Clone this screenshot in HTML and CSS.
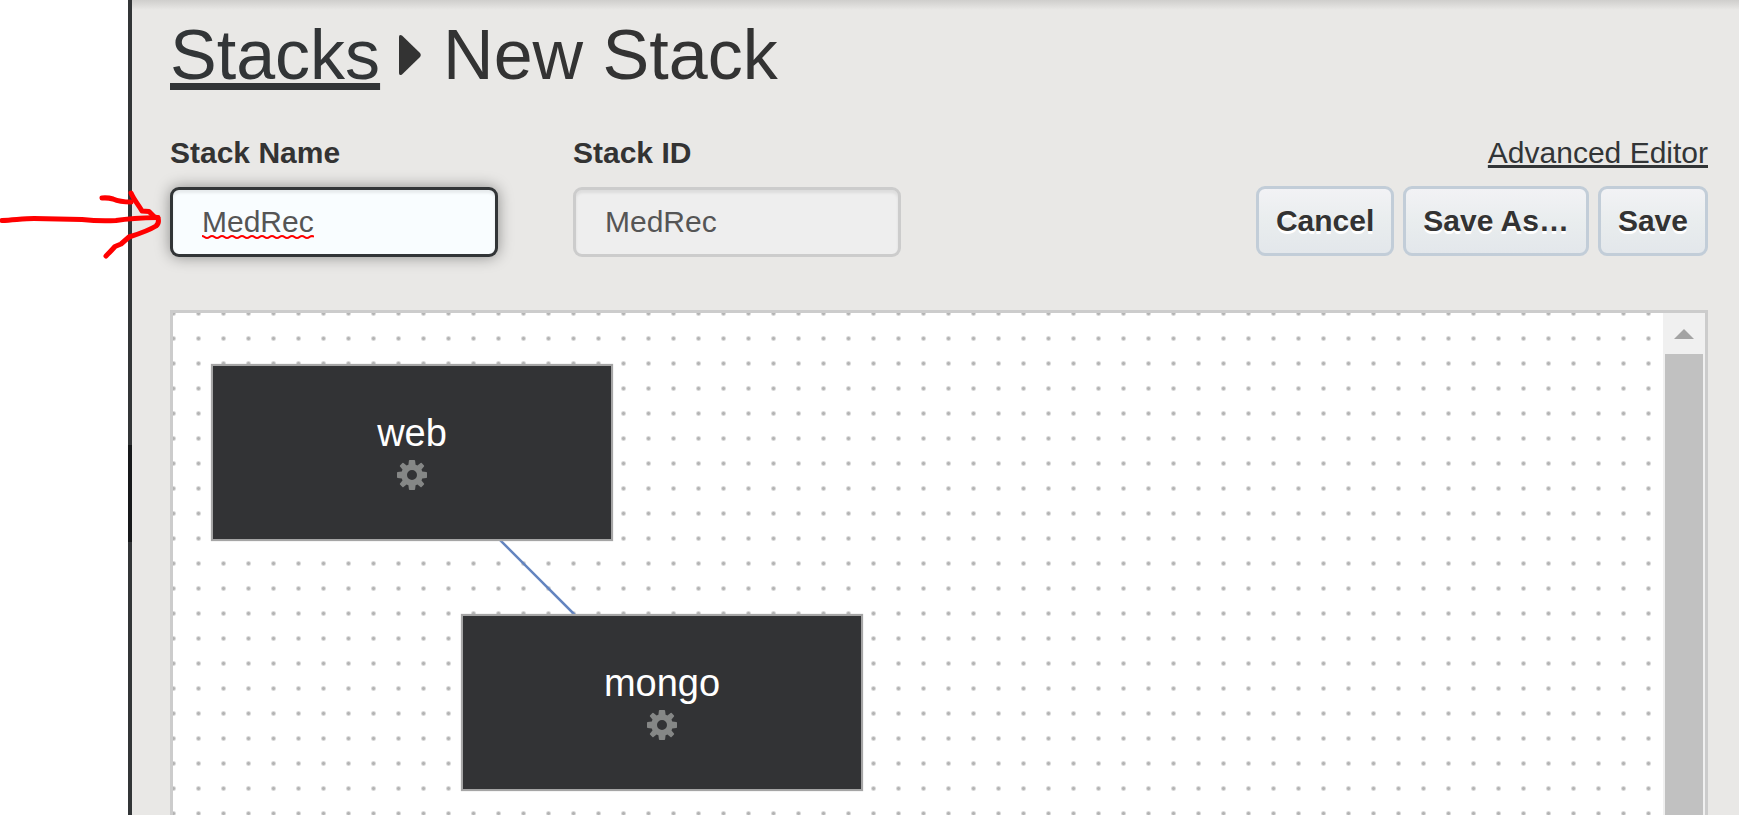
FILE: index.html
```
<!DOCTYPE html>
<html lang="en">
<head>
<meta charset="utf-8">
<title>New Stack</title>
<link rel="stylesheet" href="styles.css">
</head>
<body>
<div class="page">
  <div class="rail"><div class="rail-handle"></div></div>
  <main class="main">
    <h1 class="title">
      <a class="title-link" href="#stacks">Stacks</a>
      <svg class="title-caret" viewBox="0 0 22 42" aria-hidden="true"><path d="M0 3Q0 0 3 1.500L21 19Q22.500 21 21 23L3 40.500Q0 42 0 39Z"/></svg>
      <span>New Stack</span>
    </h1>
    <form class="toolbar">
      <div class="field">
        <label class="label" for="stack-name">Stack Name</label>
        <div class="control">
          <input class="input input-active" id="stack-name" type="text" value="MedRec" spellcheck="false">
          <svg class="squiggle" viewBox="0 0 112 6" aria-hidden="true"><path d="M0 2C2.500 2 2.500 4 5 4S7.500 2 10 2S12.500 4 15 4S17.500 2 20 2S22.500 4 25 4S27.500 2 30 2S32.500 4 35 4S37.500 2 40 2S42.500 4 45 4S47.500 2 50 2S52.500 4 55 4S57.500 2 60 2S62.500 4 65 4S67.500 2 70 2S72.500 4 75 4S77.500 2 80 2S82.500 4 85 4S87.500 2 90 2S92.500 4 95 4S97.500 2 100 2S102.500 4 105 4S107.500 2 110 2L112 2.500"/></svg>
        </div>
      </div>
      <div class="field">
        <label class="label" for="stack-id">Stack ID</label>
        <input class="input" id="stack-id" type="text" value="MedRec" spellcheck="false" readonly>
      </div>
      <div class="actions">
        <a class="advanced" href="#advanced">Advanced Editor</a>
        <div class="buttons">
          <button class="button" type="button">Cancel</button>
          <button class="button" type="button">Save As…</button>
          <button class="button" type="button">Save</button>
        </div>
      </div>
    </form>
    <section class="editor">
      <div class="canvas">
        <svg class="links" aria-hidden="true"><path d="M239 139L489 389"/></svg>
        <div class="node node-web">
          <span>web</span>
          <svg class="gear" viewBox="-15 -15 30 30" aria-hidden="true"><use href="#gear"/></svg>
        </div>
        <div class="node node-mongo">
          <span>mongo</span>
          <svg class="gear" viewBox="-15 -15 30 30" aria-hidden="true"><use href="#gear"/></svg>
        </div>
      </div>
      <div class="scrollbar">
        <svg class="scroll-up" viewBox="0 0 20 10" aria-hidden="true"><path d="M0 10L10 0L20 10Z"/></svg>
        <div class="thumb"></div>
      </div>
    </section>
  </main>
  <svg class="pointer" viewBox="0 0 165 80" aria-hidden="true">
    <path d="M2 40.500C14 40 24 38.500 34 38.500L82 39.500Q100 41.500 116 40.500Q132 38 158 37.500"/>
    <path d="M102 18Q108 17.500 113 19Q120 22 131 22"/>
    <path d="M131 13C134 20 138 24 142 31L149 31.500L154 36.500L158 38Q159.500 43 156 46Q148 51 129 57L121 64L115 66.500Q111 71 106 76"/>
  </svg>
</div>
<svg class="defs" aria-hidden="true">
  <defs>
    <path id="gear" fill-rule="evenodd" d="M-2.300 -15H2.300Q3 -15 3.100 -14.300L3.600 -10.200L5.400 -9.500L8.600 -12Q9.200 -12.400 9.700 -11.900L12 -9.500Q12.400 -9 12 -8.500L9.500 -5.400L10.200 -3.600L14.300 -3.100Q15 -3 15 -2.300V2.300Q15 3 14.300 3.100L10.200 3.600L9.500 5.400L12 8.500Q12.400 9 12 9.500L9.600 12Q9 12.400 8.500 12L5.400 9.500L3.600 10.200L3.100 14.300Q3 15 2.300 15H-2.300Q-3 15 -3.100 14.300L-3.600 10.200L-5.400 9.500L-8.500 12Q-9 12.400 -9.600 12L-12 9.500Q-12.400 9 -12 8.500L-9.500 5.400L-10.200 3.600L-14.300 3.100Q-15 3 -15 2.300V-2.300Q-15 -3 -14.300 -3.100L-10.200 -3.600L-9.500 -5.400L-12 -8.500Q-12.400 -9 -12 -9.500L-9.600 -12Q-9 -12.400 -8.500 -12L-5.400 -9.500L-3.600 -10.200L-3.100 -14.300Q-3 -15 -2.300 -15ZM0 -5A5 5 0 1 0 0 5A5 5 0 1 0 0 -5Z"/>
  </defs>
</svg>
</body>
</html>
```
FILE: styles.css
```
* {
  box-sizing: border-box;
}

body {
  margin: 0;
  background: #fff;
  color: #333;
  font-family: "Liberation Sans", Arial, sans-serif;
  font-size: 30px;
  line-height: 36px;
}

.defs {
  position: absolute;
  width: 0;
  height: 0;
}

.page {
  position: relative;
  display: flex;
  height: 100vh;
  padding-left: 128px;
  overflow: hidden;
}

.rail {
  flex: none;
  width: 4px;
  padding-top: 445px;
  background: #323537;
}

.rail-handle {
  height: 97px;
  background: #16181a;
}

.main {
  flex: 1;
  min-width: 0;
  display: flex;
  flex-direction: column;
  padding: 15px 31px 0 38px;
  background: linear-gradient(#cfcecc, #e9e8e6 10px);
}

.title {
  display: flex;
  align-items: center;
  margin: 0 0 40px;
  font-size: 70px;
  font-weight: 400;
  line-height: 80px;
}

.title-link {
  color: #323537;
  text-decoration: underline 7px;
  text-underline-offset: 4px;
  text-decoration-skip-ink: none;
}

.title-caret {
  width: 22px;
  height: 42px;
  margin: 0 22px 0 19px;
  fill: #333;
}

.toolbar {
  display: flex;
  gap: 75px;
  margin: 0 0 53px;
}

.field {
  display: flex;
  flex-direction: column;
  gap: 16px;
  width: 328px;
}

.label {
  font-weight: 700;
}

.control {
  position: relative;
}

.input {
  display: block;
  width: 100%;
  height: 70px;
  padding: 0 29px;
  border: 3px solid #ccc;
  border-radius: 9px;
  outline: 0;
  background: #eee;
  box-shadow: inset 0 3px 3px rgba(0, 0, 0, 0.075);
  color: #555;
  font: inherit;
}

.input-active {
  border-color: #323537;
  background: #f9fdff;
  box-shadow: inset 0 3px 3px rgba(0, 0, 0, 0.075), 0 0 15px rgba(0, 0, 0, 0.4);
}

.squiggle {
  position: absolute;
  left: 32px;
  bottom: 17px;
  width: 112px;
  height: 6px;
  fill: none;
  stroke: #f00;
  stroke-width: 2;
}

.actions {
  display: flex;
  flex-direction: column;
  align-items: flex-end;
  gap: 15px;
  margin-left: auto;
}

.advanced {
  color: #323537;
  text-decoration: underline 3px;
  text-underline-offset: 2px;
  text-decoration-skip-ink: none;
}

.buttons {
  display: flex;
  gap: 9px;
}

.button {
  height: 70px;
  padding: 0 17px;
  border: 3px solid #c2cdd8;
  border-radius: 9px;
  background: linear-gradient(#f2f2f5, #e9edee 50%, #e3e7eb);
  color: #333;
  font: inherit;
  font-weight: 700;
  text-shadow: 0 3px 0 #fff;
}

.editor {
  flex: 1;
  min-height: 0;
  display: flex;
  border: 3px solid #ccc;
  border-bottom: 0;
  background: #fff;
}

.canvas {
  position: relative;
  flex: 1;
  overflow: hidden;
  background: radial-gradient(circle, #b4b4b4 1px, #fff 3px) -12px -12px / 25px 25px;
}

.links {
  position: absolute;
  inset: 0;
  width: 100%;
  height: 100%;
  fill: none;
  stroke: #6384bf;
  stroke-width: 2.5;
}

.node {
  position: absolute;
  display: flex;
  flex-direction: column;
  align-items: center;
  width: 402px;
  height: 177px;
  padding-top: 45px;
  border: 2px solid #a5a5a5;
  background: #323335;
  box-shadow: 0 0 1px #bbb;
  color: #fff;
  font-size: 38px;
  line-height: 44px;
}

.node-web {
  left: 38px;
  top: 51px;
}

.node-mongo {
  left: 288px;
  top: 301px;
}

.gear {
  width: 30px;
  height: 30px;
  margin-top: 5px;
  fill: #858786;
}

.scrollbar {
  display: flex;
  flex-direction: column;
  align-items: center;
  width: 42px;
  padding-top: 16px;
  background: #f0f0f0;
}

.scroll-up {
  flex: none;
  width: 20px;
  height: 10px;
  margin-bottom: 15px;
  fill: #a3a3a3;
}

.thumb {
  flex: 1;
  width: 38px;
  background: #c1c1c1;
}

.pointer {
  position: absolute;
  left: 0;
  top: 180px;
  width: 165px;
  height: 80px;
  fill: none;
  stroke: #f00;
  stroke-width: 5;
  stroke-linecap: round;
  stroke-linejoin: round;
  pointer-events: none;
}
```
